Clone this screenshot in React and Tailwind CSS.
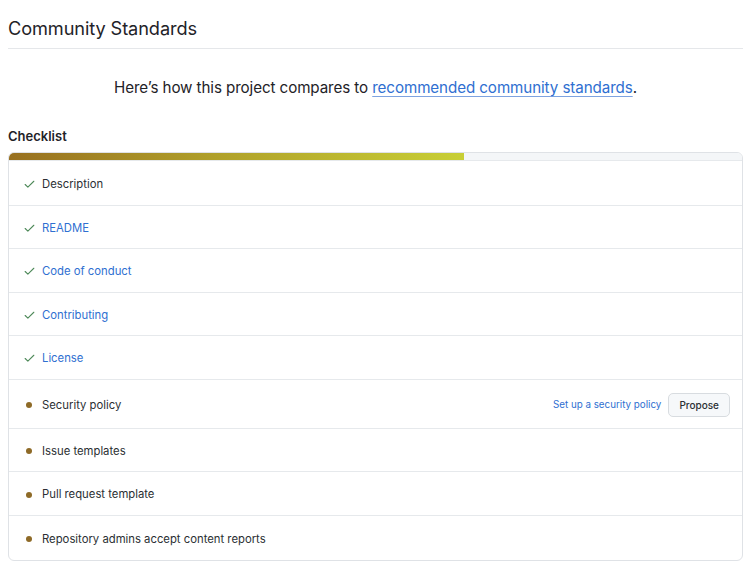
import { Check } from 'lucide-react';

const ITEMS = [
  { label: 'Description', done: true, link: false },
  { label: 'README', done: true, link: true },
  { label: 'Code of conduct', done: true, link: true },
  { label: 'Contributing', done: true, link: true },
  { label: 'License', done: true, link: true },
  { label: 'Security policy', done: false, action: true },
  { label: 'Issue templates', done: false },
  { label: 'Pull request template', done: false },
  { label: 'Repository admins accept content reports', done: false },
];

export default function App() {
  return (
    <div className="min-h-screen bg-white text-[#1f2328] font-['Inter','Liberation_Sans',sans-serif]">
      <div className="px-2 pt-[15px]">
        {/* header */}
        <h2 className="text-[18.2px] leading-[26px] pb-[7px] border-b border-[#e5e7ea] tracking-[-0.1px]">
          Community Standards
        </h2>

        <p className="text-center text-[15.2px] leading-[24px] mt-[27px] tracking-[-0.1px]">
          Here’s how this project compares to{' '}
          <a className="text-[#2f6fd1] underline underline-offset-[3px] decoration-[#7ea3e0]">
            recommended community standards
          </a>
          .
        </p>

        <h3 className="text-[13px] font-semibold leading-[18px] mt-[27px]">Checklist</h3>

        {/* checklist box */}
        <div className="mt-[7px] border border-[#dfe2e6] rounded-[6px] overflow-hidden">
          <div className="h-[8px] bg-[#f4f6f8] border-b border-[#e6e9ec]">
            <div className="h-full w-[62.1%] bg-[linear-gradient(90deg,#987020_0%,#b0a02a_45%,#c8cf36_100%)]" />
          </div>
          {ITEMS.map((it, i) => (
            <div
              key={it.label}
              className={
                'flex items-center px-[14px] pt-[3px] text-[11.3px] ' +
                (it.action ? 'h-[49px]' : i === ITEMS.length - 1 ? 'h-[45px]' : 'h-[43.5px]') +
                (i > 0 ? ' border-t border-[#e6e9ec]' : '')
              }
            >
              <span className="w-[19px] flex items-center">
                {it.done ? (
                  <Check size={13} strokeWidth={2} className="text-[#4f8a5a]" />
                ) : (
                  <span className="ml-[3px] w-[6px] h-[6px] rounded-full bg-[#8e6a27]" />
                )}
              </span>
              <span className={it.link ? 'text-[#2f6fd1]' : 'text-[#2b2f33]'}>{it.label}</span>
              {it.action && (
                <div className="ml-auto flex items-center gap-[7px] -mr-[2px]">
                  <a className="text-[#2f6fd1] text-[9.8px]">Set up a security policy</a>
                  <button className="h-[24px] px-[10px] text-[10px] font-medium rounded-[5px] border border-[#d8dce0] bg-[#f6f8fa] text-[#2b2f33]">
                    Propose
                  </button>
                </div>
              )}
            </div>
          ))}
        </div>
      </div>
    </div>
  );
}
